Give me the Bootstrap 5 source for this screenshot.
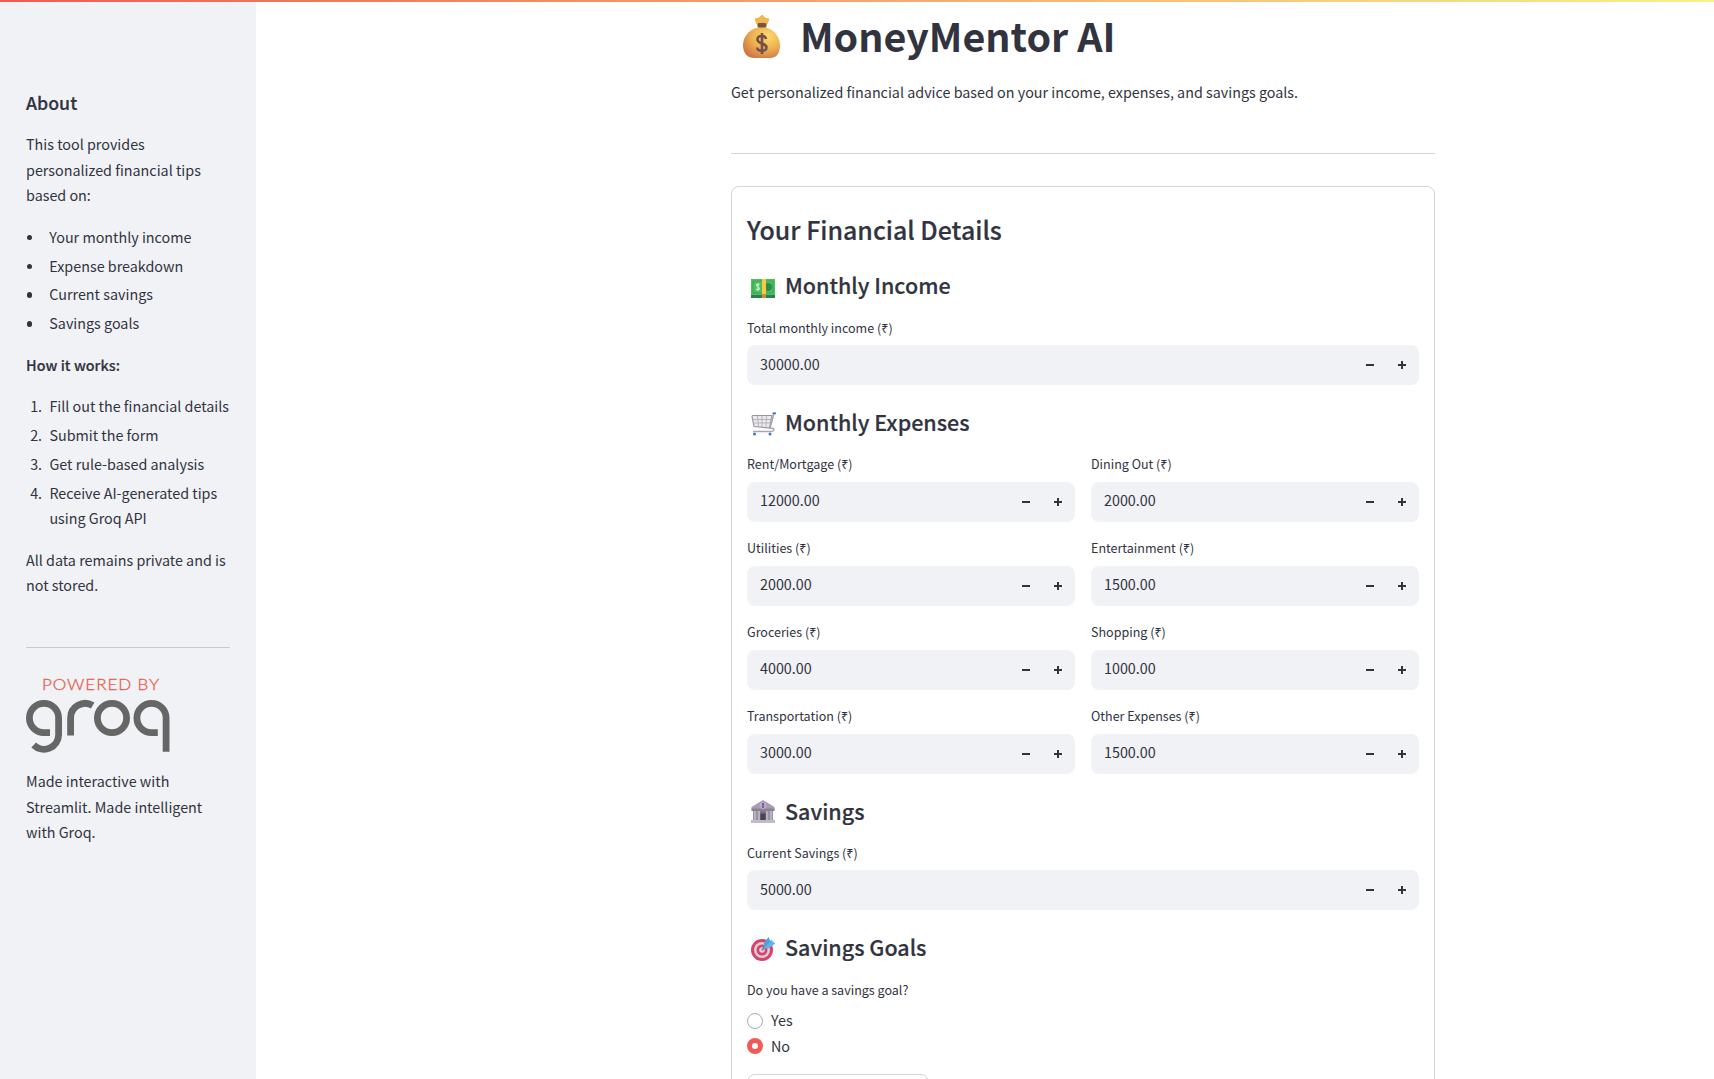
<!DOCTYPE html>
<html lang="en">
<head>
<meta charset="utf-8">
<meta name="viewport" content="width=device-width, initial-scale=1">
<title>MoneyMentor AI</title>
<link href="https://cdn.jsdelivr.net/npm/bootstrap@5.3.0/dist/css/bootstrap.min.css" rel="stylesheet">
<style>
  body { font-family: "Noto Sans CJK SC", "Noto Sans", sans-serif; font-size: 14.33px; line-height: 25.6px; color: #31333f; height: 1079px; overflow: hidden; }
  h1, h2, h3, h4 { color: #31333f; font-weight: 500; -webkit-text-stroke: .2px #31333f; }
  strong { font-weight: 500; letter-spacing: .06px; -webkit-text-stroke: .2px #31333f; }
  .topline { height: 2px; background: linear-gradient(90deg, #f05b55, #f9f08a); z-index: 5; }
  .side { width: 256px; height: 1079px; padding: 87px 26px 0; background: #f0f2f6; }
  .side h4 { font-size: 17.75px; line-height: 30px; margin: 0 0 14px; }
  .side p { margin-bottom: 16px; }
  .side ul, .side ol { padding-left: 23.4px; margin-bottom: 16px; }
  .side li { margin-bottom: 3.2px; }
  .side ol li::marker { content: counter(list-item) ".\00a0\00a0\200a"; }
  .side ul { list-style: none; }
  .side ul li { display: flex; align-items: center; margin-left: -23.4px; }
  .side ul li::before { content: ""; width: 5.4px; height: 5.4px; margin: 2px 16.9px 0 1px; border-radius: 50%; background: #31333f; }
  .rule { height: 1px; margin-bottom: 32px; background: #d3d4d8; }
  .side .rule { margin: 49px 0 28px; background: #c9cbd1; }
  .groq { display: block; margin-bottom: 14px; }
  .column { width: 704px; height: 1079px; margin-left: 475px; padding-top: 11px; overflow: hidden; }
  h1 { font-size: 39.4px; line-height: 48px; margin: 0 0 20px; }
  h1.title { font-weight: 700; -webkit-text-stroke: 0; }
  h1 svg { margin: 3px 19px 0 12px; }
  .lede { line-height: 26px; margin-bottom: 48px; }
  .panel { border: 1px solid #d3d4d7; border-radius: 8px; height: 960px; padding: 25px 15px 0; }
  .panel h2 { font-size: 24.95px; line-height: 34px; margin: 0 0 24px; }
  h3 { font-size: 21.5px; line-height: 30px; margin: 22.1px 0 16.5px; }
  h2 + h3 { margin: 0 0 17px; }
  h3 svg { margin: 3px 9px 0 3px; }
  h3 .cash { margin: 5px 9px -1px 3px; }
  .fieldname { display: block; font-size: 12.54px; line-height: 21px; margin-bottom: 7px; }
  .num { height: 40px; border-radius: 8px; background: #f0f2f6; padding: 0 1px 2px 13px; color: #31333f; }
  .stepper { width: 32px; height: 32px; margin-top: 2px; }
  .pair { --bs-gutter-x: 16px; --bs-gutter-y: 16px; }
  .pair .fieldname { margin: -.6px 0 7.6px; }
  .pair .num > span { margin-top: -1px; }
  .choices { margin-top: 8px; }
  .choices > div { height: 25.6px; }
  .choices span:last-child { margin-top: -1px; }
  .dot { width: 16px; height: 16px; border: 1px solid #a9abb0; border-radius: 50%; background: #fff; }
  .dot.on { border: 5px solid #f05b55; }
  .submit { display: block; width: 182px; height: 40px; margin-top: 15px; border: 1px solid #d3d4d7; border-radius: 8px; background: #fff; }
</style>
</head>
<body>
<div class="topline fixed-top"></div>
<div class="d-flex">
  <aside class="side flex-shrink-0">
    <h4>About</h4>
    <p>This tool provides<br>personalized financial tips<br>based on:</p>
    <ul>
      <li>Your monthly income</li><li>Expense breakdown</li><li>Current savings</li><li>Savings goals</li>
    </ul>
    <p><strong>How it works:</strong></p>
    <ol>
      <li>Fill out the financial details</li><li>Submit the form</li><li>Get rule-based analysis</li><li>Receive AI-generated tips<br>using Groq API</li>
    </ol>
    <p>All data remains private and is not stored.</p>
    <div class="rule"></div>
    <svg class="groq" width="146" height="78" viewBox="26 676 146 78">
      <text x="42" y="690.4" font-family="Lato" font-weight="300" font-size="14.8" letter-spacing=".8" fill="#e8604c" stroke="#e8604c" stroke-width=".3" textLength="118" lengthAdjust="spacingAndGlyphs">POWERED BY</text>
      <g fill="none" stroke="#666" stroke-width="6.8">
        <path d="M50 732.6H44A14.6 14.6 0 1 1 58.6 718V734.8A14.6 14.6 0 0 1 33.7 745"/>
        <path d="M70.6 735.4V718A14.6 14.6 0 0 1 92.7 705.5"/>
        <circle cx="112" cy="718" r="14.6"/>
        <path d="M157.8 732.6H151.5A14.6 14.6 0 1 1 166.1 718V751.7"/>
      </g>
    </svg>
    <p class="made">Made interactive with Streamlit. Made intelligent with Groq.</p>
  </aside>
  <main class="column">
    <h1 class="title d-flex align-items-center">
      <svg width="38" height="44" viewBox="0 0 38 44">
        <defs>
          <radialGradient id="bag" cx=".65" cy=".3" r=".75"><stop offset="0" stop-color="#fbdc6e"/><stop offset=".55" stop-color="#eeb051"/><stop offset="1" stop-color="#cf7a45"/></radialGradient>
        </defs>
        <path d="M14 9L12 4L16 3L19 0L22 3L26 4L24 9Z" fill="#efb84e" stroke="#efb84e" stroke-linejoin="round"/>
        <path d="M19 12C28 12 37 20 37 30C37 39 33 43 27 43H11C5 43 0 39 0 30C0 20 9 12 19 12Z" fill="url(#bag)"/>
        <rect x="14.500" y="8" width="9" height="4.500" rx="1.500" fill="#7d5048"/>
        <path d="M23 24C22.500 20 14.500 20 14.500 24.500C14.500 29.500 23.500 27.500 23.500 32.500C23.500 37 14.500 37 14.200 32.500M19 18V39" fill="none" stroke="#75504a" stroke-width="2.600"/>
      </svg>MoneyMentor AI</h1>
    <p class="lede">Get personalized financial advice based on your income, expenses, and savings goals.</p>
    <div class="rule"></div>
    <section class="panel">
      <h2>Your Financial Details</h2>
      <h3 class="d-flex align-items-center">
        <svg class="cash" width="26" height="26" viewBox="0 0 26 26">
          <path d="M1 5H25V23H1Z" fill="#2c7d4f"/><path d="M1 4H25V20H1Z" fill="#4fbf5f"/>
          <path d="M3 6H23V18H3Z" fill="none" stroke="#3ca656"/><circle cx="18" cy="12" r="4" fill="#2d8a50"/>
          <path d="M9.500 10Q7.500 8 6.500 10Q6.500 11.500 8 12Q9.500 12.500 9.300 14Q8 15.500 6 14M8 8V16" stroke="#c9e8cd" fill="none" stroke-width="1.200"/>
          <path d="M12 4H16V20H12Z" fill="#fcc944"/><path d="M12 19H16V23H12Z" fill="#cc8b3a"/>
        </svg>Monthly Income</h3>
      <label class="fieldname">Total monthly income (₹)</label>
      <div class="num d-flex align-items-center" data-v="30000.00"></div>
      <h3 class="d-flex align-items-center">
        <svg width="26" height="26" viewBox="0 0 26 26" fill="none">
          <path d="M2 5.500Q2 4.500 3 4.500H22L19.500 17L4 15.500Z" fill="#ebe9ee" stroke="#9a959f" stroke-width="1.200"/>
          <path d="M2.500 8.500H21M3 12H20.500M7.500 5L8.500 16M12 5V16M16.500 5L16 16.500" stroke="#b3afb8" stroke-width=".9"/>
          <path d="M24 2.500L20 17Q25 17 23.500 19.500Q23 20.500 21 20.500H3" stroke="#aaa5af" stroke-width="1.500"/>
          <path d="M22.500 2.300H26" stroke="#4674c5" stroke-width="1.800"/><circle cx="4.500" cy="23" r="1.500" fill="#4674c5"/><circle cx="20" cy="23" r="1.500" fill="#4674c5"/>
        </svg>Monthly Expenses</h3>
      <div class="row pair">
        <div class="col-6"><label class="fieldname">Rent/Mortgage (₹)</label><div class="num d-flex align-items-center" data-v="12000.00"></div></div>
        <div class="col-6"><label class="fieldname">Dining Out (₹)</label><div class="num d-flex align-items-center" data-v="2000.00"></div></div>
        <div class="col-6"><label class="fieldname">Utilities (₹)</label><div class="num d-flex align-items-center" data-v="2000.00"></div></div>
        <div class="col-6"><label class="fieldname">Entertainment (₹)</label><div class="num d-flex align-items-center" data-v="1500.00"></div></div>
        <div class="col-6"><label class="fieldname">Groceries (₹)</label><div class="num d-flex align-items-center" data-v="4000.00"></div></div>
        <div class="col-6"><label class="fieldname">Shopping (₹)</label><div class="num d-flex align-items-center" data-v="1000.00"></div></div>
        <div class="col-6"><label class="fieldname">Transportation (₹)</label><div class="num d-flex align-items-center" data-v="3000.00"></div></div>
        <div class="col-6"><label class="fieldname">Other Expenses (₹)</label><div class="num d-flex align-items-center" data-v="1500.00"></div></div>
      </div>
      <h3 class="d-flex align-items-center">
        <svg width="26" height="26" viewBox="0 0 26 26">
          <path d="M13 1L24.500 8V11H1.500V8Z" fill="#a79fae"/><path d="M1.500 9.500H24.500V12H1.500Z" fill="#8a8293"/>
          <path d="M3 12H23V21H3Z" fill="#7d7586"/><path d="M3.500 12H6.500V21H3.500ZM7.500 12H10V21H7.500ZM16 12H18.500V21H16ZM19.500 12H22.500V21H19.500Z" fill="#b9b1bf"/>
          <path d="M1 21H25V24H1Z" fill="#c2bac8"/><path d="M10.500 14.500H15.500V21H10.500Z" fill="#4a4352"/>
          <circle cx="13" cy="6.500" r="3.400" fill="#b9aec6"/><path d="M13 4V9" stroke="#7651a4" stroke-width="1.700"/>
        </svg>Savings</h3>
      <label class="fieldname">Current Savings (₹)</label>
      <div class="num d-flex align-items-center" data-v="5000.00"></div>
      <h3 class="d-flex align-items-center">
        <svg width="26" height="26" viewBox="0 0 26 26">
          <circle cx="12" cy="14" r="11" fill="#d64369"/><circle cx="12" cy="14" r="8" fill="#dfc9da"/><circle cx="12" cy="14" r="5.500" fill="#d64369"/><circle cx="12" cy="14" r="2.800" fill="#dfc9da"/>
          <path d="M12 14L18 8" stroke="#56708f" stroke-width="1.500"/><path d="M13.500 12.500L14 7L18.500 1L20 4.500L21.500 5L25 7.500L19.500 11.500Z" fill="#4a9fe6"/><path d="M14 12.500L22 3.500L22.500 5.500L25 7.500L19.500 11.500Z" fill="#62b4ee"/>
        </svg>Savings Goals</h3>
      <label class="fieldname">Do you have a savings goal?</label>
      <div class="choices">
        <div class="d-flex align-items-center"><span class="dot"></span><span class="ms-2">Yes</span></div>
        <div class="d-flex align-items-center"><span class="dot on"></span><span class="ms-2">No</span></div>
      </div>
      <button class="submit" type="button"></button>
    </section>
  </main>
</div>
<script src="https://cdn.jsdelivr.net/npm/bootstrap@5.3.0/dist/js/bootstrap.bundle.min.js"></script>
<script>
  // Fill each number field with its value and the two step controls.
  document.querySelectorAll('.num').forEach(function (n) {
    n.innerHTML = '<span class="me-auto">' + n.dataset.v + '</span>' +
      '<svg class="stepper" viewBox="0 0 32 32"><path d="M12 15H20V17H12Z" fill="#31333f"/></svg>' +
      '<svg class="stepper" viewBox="0 0 32 32"><path d="M12 15H20V17H12ZM15 12H17V20H15Z" fill="#31333f"/></svg>';
  });
</script>
</body>
</html>
